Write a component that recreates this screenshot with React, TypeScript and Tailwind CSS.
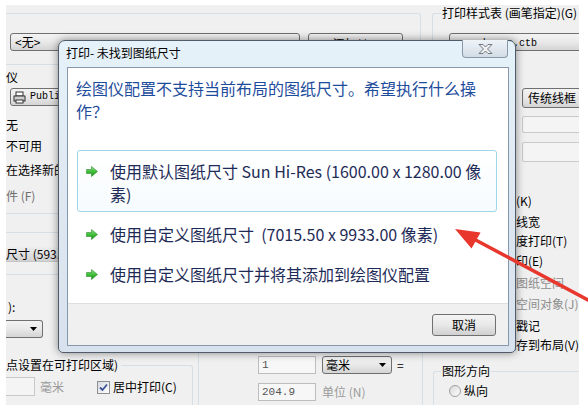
import React from 'react';

const cjk = "font-['Noto_Sans_CJK_SC','Noto_Sans',sans-serif]";

const Combo: React.FC<{ className?: string; arrow?: boolean; children?: React.ReactNode }> = ({
  className = '',
  arrow,
  children,
}) => (
  <div
    className={`flex items-center border border-[#707070] bg-gradient-to-b from-[#f3f3f3] via-[#e9e9e9] to-[#d4d4d4] text-[12px] leading-[14px] text-black overflow-hidden whitespace-nowrap ${className}`}
  >
    <div className="flex-1 min-w-0 overflow-hidden flex items-center">{children}</div>
    {arrow && (
      <svg width="7" height="4" viewBox="0 0 7 4" className="mr-[5px] shrink-0">
        <path d="M0 0H7L3.5 4Z" fill="#000" />
      </svg>
    )}
  </div>
);

const Check: React.FC<{ checked?: boolean; disabled?: boolean }> = ({ checked, disabled }) => (
  <span
    className={`inline-flex w-[13px] h-[13px] shrink-0 items-center justify-center border ${
      disabled ? 'border-[#b8b8b8] bg-[#f4f4f4]' : 'border-[#8e8f8f] bg-gradient-to-br from-[#d6dbe3] to-white'
    }`}
  >
    {checked && (
      <svg width="9" height="9" viewBox="0 0 9 9">
        <path d="M1 4.5L3.5 7L8 1.5" fill="none" stroke="#3b5294" strokeWidth="1.8" />
      </svg>
    )}
  </span>
);

const GreenArrow = () => (
  <svg width="12" height="11" viewBox="0 0 12 11" className="shrink-0">
    <defs>
      <linearGradient id="garrow" x1="0" y1="0" x2="0" y2="1">
        <stop offset="0" stopColor="#8ee28a" />
        <stop offset="0.5" stopColor="#3fbf3a" />
        <stop offset="1" stopColor="#1b8f1b" />
      </linearGradient>
    </defs>
    <path d="M0.5 3.5H5.5V0.5L11.5 5.5L5.5 10.5V7.5H0.5Z" fill="url(#garrow)" stroke="#2f8a2f" strokeWidth="0.6" />
  </svg>
);

const options = [
  { label: '后台打印(K)', mt: 'mt-[32px]', gray: false },
  { label: '打印对象线宽', mt: 'mt-[7px]', gray: false },
  { label: '使用透明度打印(T)', mt: 'mt-[5px]', gray: false },
  { label: '按样式打印(E)', mt: 'mt-[6px]', gray: false },
  { label: '最后打印图纸空间', mt: 'mt-[8px]', gray: true },
  { label: '隐藏图纸空间对象(J)', mt: 'mt-[7px]', gray: true },
  { label: '打开打印戳记', mt: 'mt-[8px]', gray: false },
  { label: '将修改保存到布局(V)', mt: 'mt-[5px]', gray: false },
];

const App: React.FC = () => {
  return (
    <div className={`relative w-[588px] h-[405px] overflow-hidden bg-white pt-[5px] pl-[6px] ${cjk}`}>
      {/* Background plot dialog */}
      <div className="w-[573px] h-[400px] bg-[#f0f0f0] flex overflow-hidden text-[12px] leading-[14px] text-black">
        {/* Left + middle */}
        <div className="w-[419px] shrink-0 flex flex-col">
          <div className="mt-[8px] h-[52px] w-[415px] border-t border-r border-b border-[#d5dfe5] rounded-r-[3px] pt-[19px] pl-[4px] flex gap-[8px]">
            <Combo className="w-[290px] h-[18px] rounded-[3px] pl-[4px]">&lt;无&gt;</Combo>
            <div className="w-[95px] h-[18px] border border-[#707070] rounded-[3px] bg-gradient-to-b from-[#f3f3f3] to-[#d8d8d8] flex items-center justify-center pt-[3px]">
              添加(.)...
            </div>
          </div>

          <div className="flex flex-1">
            {/* Left column */}
            <div className="w-[187px] shrink-0 flex flex-col">
              <div className="mt-[5px] h-[14px]">仪</div>
              <Combo className="mt-[4px] ml-[4px] w-[180px] h-[18px] rounded-[3px] pl-[2px]">
                <svg width="13" height="13" viewBox="0 0 13 13" className="shrink-0">
                  <rect x="3" y="1" width="7" height="4" fill="#fff" stroke="#333" />
                  <rect x="1" y="5" width="11" height="5" fill="#cfcfcf" stroke="#333" />
                  <rect x="3" y="9" width="7" height="3" fill="#fff" stroke="#333" />
                </svg>
                <span className="ml-[4px] font-['Liberation_Mono',monospace] text-[10px]">PublishToWeb JPG.pc3</span>
              </Combo>
              <div className="mt-[12px] h-[14px]">无</div>
              <div className="mt-[7px] h-[14px]">不可用</div>
              <div className="mt-[10px] h-[14px] whitespace-nowrap">在选择新的绘图仪配置名称之前</div>
              <div className="mt-[12px] h-[14px] text-[#6d6d6d]">件 (F)</div>
              <div className="mt-[10px] border-t border-[#d5dfe5]" />
              <div className="mt-[18px] border-t border-[#d5dfe5]" />
              <div className="mt-[12px] h-[17px] bg-gradient-to-b from-[#f2f2f2] to-[#d2d2d2] border-b border-[#c4c4c4] whitespace-nowrap leading-[17px]">
                尺寸 (593.00 x 841.00 毫米)
              </div>
              <div className="mt-[12px] border-t border-[#d5dfe5]" />
              <div className="mt-[25px] h-[14px] pl-[2px]">):</div>
              <Combo arrow className="mt-[6px] w-[37px] h-[18px] border-l-0 rounded-r-[3px]" />
              <div className="mt-[27px] flex-1 border-t border-r border-[#d5dfe5] rounded-tr-[3px] flex flex-col">
                <div className="-mt-[8px] h-[14px] w-fit bg-[#f0f0f0] pr-[3px] whitespace-nowrap">点设置在可打印区域)</div>
                <div className="mt-[5px] flex items-center">
                  <div className="w-[29px] h-[19px] border border-l-0 border-[#c9c9c9] bg-[#f4f4f4]" />
                  <span className="ml-[5px] text-[#9a9a9a]">毫米</span>
                  <span className="ml-[33px]"><Check checked /></span>
                  <span className="ml-[3px]">居中打印(C)</span>
                </div>
              </div>
            </div>

            {/* Middle column */}
            <div className="flex-1 flex flex-col justify-end">
              <div className="ml-[5px] w-[225px] h-[58px] border-t border-l border-r border-[#d5dfe5] rounded-t-[3px] pt-[8px] pl-[59px]">
                <div className="flex items-center">
                  <div className="w-[58px] h-[18px] border border-[#bdbdbd] bg-[#f7f7f7] pl-[3px] leading-[16px] text-[#555] font-['Liberation_Mono',monospace] text-[11px]">
                    1
                  </div>
                  <Combo arrow className="ml-[6px] w-[70px] h-[18px] rounded-[3px] pl-[3px]">毫米</Combo>
                  <span className="ml-[5px]">=</span>
                </div>
                <div className="mt-[9px] flex items-center">
                  <div className="w-[58px] h-[18px] border border-[#bdbdbd] bg-[#f7f7f7] pl-[3px] leading-[16px] text-[#555] font-['Liberation_Mono',monospace] text-[11px]">
                    204.9
                  </div>
                  <span className="ml-[6px] text-[#9a9a9a]">单位 (N)</span>
                </div>
              </div>
            </div>
          </div>
        </div>

        {/* Right column */}
        <div className="ml-[7px] flex-1 flex flex-col">
          <div className="mt-[8px] h-[52px] border-t border-l border-[#d5dfe5] rounded-tl-[3px] flex flex-col">
            <div className="-mt-[8px] ml-[8px] h-[14px] w-fit bg-[#f0f0f0] px-[1px] whitespace-nowrap">
              打印样式表 (画笔指定)(G)
            </div>
            <Combo className="mt-[13px] ml-[16px] w-[140px] h-[18px] rounded-[3px] pl-[3px] pt-[3px]">
              <span className="font-['Liberation_Mono',monospace] text-[10px]">monochrome.ctb</span>
            </Combo>
          </div>
          <Combo className="mt-[23px] ml-[90px] w-[70px] h-[20px] rounded-[3px] pl-[5px]">传统线框</Combo>
          <div className="mt-[8px] ml-[90px] w-[70px] h-[17px] border border-[#c9c9c9] rounded-[2px] bg-[#f4f4f4]" />
          <div className="mt-[9px] ml-[90px] w-[70px] h-[20px] border border-[#c9c9c9] rounded-[2px] bg-[#f4f4f4]" />
          {options.map((o) => (
            <div key={o.label} className={`${o.mt} h-[14px] pl-[19px] flex items-center whitespace-nowrap`}>
              <Check disabled={o.gray} />
              <span className={`ml-[4px] ${o.gray ? 'text-[#8d8d8d]' : ''}`}>{o.label}</span>
            </div>
          ))}
          <div className="mt-[19px] ml-[1px] flex-1 border-t border-l border-[#d5dfe5] rounded-tl-[3px] flex flex-col">
            <div className="-mt-[8px] ml-[7px] h-[14px] w-fit bg-[#f0f0f0] px-[1px]">图形方向</div>
            <div className="mt-[6px] pl-[15px] h-[14px] flex items-center">
              <span className="w-[12px] h-[12px] rounded-full border border-[#a0a0a0] bg-gradient-to-br from-[#d8d8d8] to-white" />
              <span className="ml-[3px]">纵向</span>
            </div>
          </div>
        </div>
      </div>

      {/* Task dialog */}
      <div className="absolute left-[58px] top-[40px] w-[458px] h-[313px] rounded-t-[7px] rounded-b-[5px] border border-[#505c6a] bg-gradient-to-b from-[#e6f2fa] via-[#dde8f2] to-[#d7e2ee] shadow-[0_0_9px_rgba(0,0,0,0.45)] flex flex-col">
        <div className="h-[26px] shrink-0 pl-[7px] pt-[5px] text-[12px] leading-[14px] text-black">打印- 未找到图纸尺寸</div>
        <div className="absolute right-[7px] -top-px w-[46px] h-[18px] rounded-b-[4px] border border-t-0 border-[#8a98a8] bg-gradient-to-b from-[#eef3f8] to-[#d3dce6] flex items-center justify-center">
          <svg width="15" height="10" viewBox="0 0 15 10">
            <path
              d="M1 0.5H5L7.5 3L10 0.5H14L9.5 5L14 9.5H10L7.5 7L5 9.5H1L5.5 5Z"
              fill="#f2f2f2"
              stroke="#6f7780"
              strokeWidth="1"
              strokeLinejoin="round"
            />
          </svg>
        </div>

        <div className="flex-1 ml-[8px] mr-[6px] mb-[6px] border border-[#8697aa] bg-white flex flex-col">
          <div className="flex-1 pt-[9px] flex flex-col">
            <div className="ml-[8px] w-[410px] text-[16px] leading-[23px] text-[#1d4c9c]">
              绘图仪配置不支持当前布局的图纸尺寸。希望执行什么操作？
            </div>
            <div className="mt-[27px] ml-[9px] w-[420px] flex flex-col gap-[1px] text-[16px] leading-[23px] text-[#1e2b57]">
              <div className="flex items-start border border-[#9dd6e8] rounded-[3px] bg-gradient-to-b from-white to-[#f6fbfd] pt-[9px] pb-[5px] pl-[8px]">
                <span className="mt-[6px]"><GreenArrow /></span>
                <div className="ml-[12px] flex flex-col whitespace-nowrap">
                  <span>使用默认图纸尺寸 Sun Hi-Res (1600.00 x 1280.00 像</span>
                  <span>素)</span>
                </div>
              </div>
              <div className="flex items-start border border-transparent pt-[9px] pb-[5px] pl-[8px]">
                <span className="mt-[6px]"><GreenArrow /></span>
                <span className="ml-[12px] whitespace-pre">使用自定义图纸尺寸  (7015.50 x 9933.00 像素)</span>
              </div>
              <div className="flex items-start border border-transparent pt-[9px] pb-[5px] pl-[8px]">
                <span className="mt-[6px]"><GreenArrow /></span>
                <span className="ml-[12px] whitespace-nowrap">使用自定义图纸尺寸并将其添加到绘图仪配置</span>
              </div>
            </div>
          </div>
          <div className="h-[42px] shrink-0 border-t border-[#dfdfdf] bg-[#f0f0f0] pt-[10px] pr-[12px] flex justify-end">
            <div className="w-[64px] h-[22px] border border-[#707070] rounded-[3px] bg-gradient-to-b from-[#f4f4f4] via-[#e8e8e8] to-[#d0d0d0] flex items-center justify-center text-[12px] text-black">
              取消
            </div>
          </div>
        </div>
      </div>

      {/* Red annotation arrow */}
      <svg className="absolute inset-0 pointer-events-none" width="588" height="405" viewBox="0 0 588 405">
        <line x1="590" y1="301" x2="470" y2="237" stroke="#e8372c" strokeWidth="3.5" strokeLinecap="round" />
        <path d="M455 229L480.5 232.5L471.5 248.5Z" fill="#e8372c" />
      </svg>
    </div>
  );
};

export default App;
